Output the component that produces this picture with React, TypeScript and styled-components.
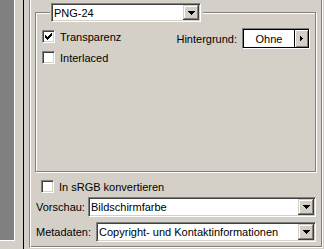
import React from "react";
import styled, { createGlobalStyle } from "styled-components";

const GlobalStyle = createGlobalStyle`
  html, body { margin: 0; padding: 0; background: #d4d0c8; }
  body {
    font-family: "Liberation Sans", Arial, sans-serif;
    font-size: 11px;
    color: #000;
  }
`;

const Frame = styled.div`
  display: flex;
  align-items: flex-start;
  width: 324px;
  height: 249px;
  overflow: hidden;
  background: #d4d0c8;
`;

const Shade = styled.div`
  flex: none;
  width: 14px;
  height: 240px;
  background: #808080;
  border-right: 1px solid #fff;
  border-bottom: 1px solid #fff;
`;

const Splitter = styled.div`
  flex: none;
  width: 1px;
  height: 249px;
  margin-left: 8px;
  background: #000;
`;

const Panel = styled.div`
  flex: none;
  box-sizing: border-box;
  width: 294px;
  height: 248px;
  margin-left: 5px;
  padding: 0 6px 0 5px;
  border: 1px solid;
  border-top: none;
  border-color: #808080 #fff #fff #808080;
  box-shadow: inset 1px 0 0 #fff, inset -1px -1px 0 #808080;
  display: flex;
  flex-direction: column;
`;

const GroupBox = styled.div`
  position: relative;
  box-sizing: border-box;
  height: 160px;
  margin-top: 12px;
  border: 1px solid #808080;
  box-shadow: 1px 1px 0 #fff, inset 1px 1px 0 #fff;
  padding: 15px 5px 0 6px;
`;

const Legend = styled.div`
  position: absolute;
  top: -10px;
  left: 14px;
  padding: 0 2px 0 1px;
  background: #d4d0c8;
`;

const Select = styled.div<{ $width?: number; $height: number }>`
  box-sizing: border-box;
  display: flex;
  align-items: stretch;
  ${(p) => (p.$width ? `width: ${p.$width}px;` : "flex: 1;")}
  height: ${(p) => p.$height}px;
  padding: 1px;
  border: 1px solid;
  border-color: #808080 #fff #fff #808080;
  box-shadow: inset 1px 1px 0 #404040, inset -1px -1px 0 #d4d0c8;
  background: #fff;
`;

const SelectValue = styled.div`
  flex: 1;
  display: flex;
  align-items: center;
  padding-left: 1px;
  white-space: nowrap;
  overflow: hidden;
`;

const DropButton = styled.div`
  flex: none;
  width: 16px;
  display: flex;
  align-items: center;
  justify-content: center;
  background: #d4d0c8;
  box-shadow: inset -1px -1px 0 #404040, inset 1px 1px 0 #d4d0c8,
    inset -2px -2px 0 #808080, inset 2px 2px 0 #fff;
`;

const OptionRow = styled.div`
  display: flex;
  align-items: flex-start;
  justify-content: space-between;
`;

const CheckLine = styled.label<{ $top?: number; $left?: number }>`
  display: flex;
  align-items: center;
  gap: 5px;
  height: 13px;
  margin-top: ${(p) => p.$top ?? 0}px;
  margin-left: ${(p) => p.$left ?? 0}px;
  white-space: nowrap;
`;

const CheckBox = styled.span`
  box-sizing: border-box;
  flex: none;
  width: 13px;
  height: 13px;
  display: flex;
  align-items: center;
  justify-content: center;
  border: 1px solid;
  border-color: #808080 #fff #fff #808080;
  box-shadow: inset 1px 1px 0 #404040, inset -1px -1px 0 #d4d0c8;
  background: #fff;
`;

const BackgroundGroup = styled.div`
  display: flex;
  align-items: center;
  gap: 5px;
  height: 21px;
  white-space: nowrap;
`;

const Swatch = styled.div`
  box-sizing: border-box;
  display: flex;
  width: 68px;
  height: 21px;
  padding: 1px;
  border: 1px solid;
  border-color: #808080 #fff #fff #808080;
  box-shadow: inset 0 0 0 1px #000;
  background: #fff;
`;

const SwatchLabel = styled.div`
  flex: 1;
  display: flex;
  align-items: center;
  justify-content: center;
`;

const SwatchButton = styled.div`
  flex: none;
  width: 13px;
  display: flex;
  align-items: center;
  justify-content: center;
  border-left: 1px solid #000;
  background: #d4d0c8;
  box-shadow: inset 1px 1px 0 #fff, inset -1px -1px 0 #808080;
`;

const FieldRow = styled.div<{ $top: number; $gap: number }>`
  display: flex;
  align-items: center;
  gap: ${(p) => p.$gap}px;
  margin-top: ${(p) => p.$top}px;
`;

const FieldLabel = styled.span`
  margin-left: 1px;
  white-space: nowrap;
`;

const Check = () => (
  <svg width="7" height="7" viewBox="0 0 7 7" shapeRendering="crispEdges">
    <path
      d="M6 0h1v1h-1z M5 1h2v1h-2z M0 2h1v1h-1z M4 2h3v1h-3z M0 3h2v1h-2z M3 3h3v1h-3z M0 4h5v1h-5z M1 5h3v1h-3z M2 6h1v1h-1z"
      fill="#000"
    />
  </svg>
);

const DownArrow = () => (
  <svg width="7" height="4" viewBox="0 0 7 4" shapeRendering="crispEdges">
    <path d="M0 0h7v1h-7z M1 1h5v1h-5z M2 2h3v1h-3z M3 3h1v1h-1z" fill="#000" />
  </svg>
);

const RightArrow = () => (
  <svg width="3" height="5" viewBox="0 0 3 5" shapeRendering="crispEdges">
    <path d="M0 0h1v5h-1z M1 1h1v3h-1z M2 2h1v1h-1z" fill="#000" />
  </svg>
);

const Dropdown = ({
  value,
  width,
  height,
}: {
  value: string;
  width?: number;
  height: number;
}) => (
  <Select $width={width} $height={height}>
    <SelectValue>{value}</SelectValue>
    <DropButton>
      <DownArrow />
    </DropButton>
  </Select>
);

const Option = ({
  label,
  checked,
  top,
  left,
}: {
  label: string;
  checked?: boolean;
  top?: number;
  left?: number;
}) => (
  <CheckLine $top={top} $left={left}>
    <CheckBox>{checked ? <Check /> : null}</CheckBox>
    <span>{label}</span>
  </CheckLine>
);

export default function App() {
  return (
    <>
      <GlobalStyle />
      <Frame>
        <Shade />
        <Splitter />
        <Panel>
          <GroupBox>
            <Legend>
              <Dropdown value="PNG-24" width={150} height={19} />
            </Legend>
            <OptionRow>
              <Option label="Transparenz" checked top={2} />
              <BackgroundGroup>
                <span>Hintergrund:</span>
                <Swatch>
                  <SwatchLabel>Ohne</SwatchLabel>
                  <SwatchButton>
                    <RightArrow />
                  </SwatchButton>
                </Swatch>
              </BackgroundGroup>
            </OptionRow>
            <Option label="Interlaced" top={2} />
          </GroupBox>
          <Option label="In sRGB konvertieren" top={8} left={6} />
          <FieldRow $top={4} $gap={3}>
            <FieldLabel>Vorschau:</FieldLabel>
            <Dropdown value="Bildschirmfarbe" height={20} />
          </FieldRow>
          <FieldRow $top={5} $gap={5}>
            <FieldLabel>Metadaten:</FieldLabel>
            <Dropdown value="Copyright- und Kontaktinformationen" height={20} />
          </FieldRow>
        </Panel>
      </Frame>
    </>
  );
}
